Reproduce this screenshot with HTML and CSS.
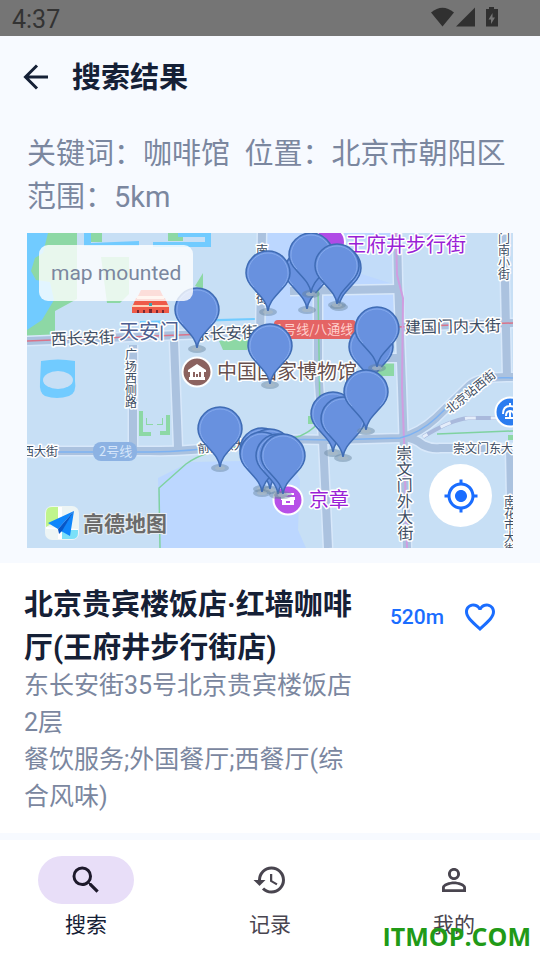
FILE: index.html
```html
<!DOCTYPE html>
<html lang="zh-CN">
<head>
    <meta charset="UTF-8">
    <meta name="viewport" content="width=device-width, initial-scale=1.0">
    <title>搜索结果</title>
    <link rel="stylesheet" href="styles.css">
</head>
<body>
    <div class="status-bar">
        <span class="time">4:37</span>
        <svg class="status-icons" viewBox="0 0 68 20" aria-hidden="true">
            <path d="M0 5.500Q11.500-4 23 5.500L11.500 19.500z"/>
            <path d="M44 .5v19H25z"/>
            <path d="M58 0h5v2h4v17.500H55V2h3zm3.500 6l-4 6.500h2.500v4.500l4-6.500h-2.500z" fill-rule="evenodd"/>
        </svg>
    </div>

    <header class="header">
        <button class="icon-btn" type="button" aria-label="返回">
            <svg class="back-icon" viewBox="0 0 36 36"><path d="M30 18H7.500M19 6.500L7.500 18 19 29.500"/></svg>
        </button>
        <h1>搜索结果</h1>
    </header>

    <main class="content">
        <p class="query">关键词：咖啡馆&nbsp; 位置：北京市朝阳区 范围：5km</p>

        <div class="map">
            <svg class="map-canvas" viewBox="27 233 486 315" role="img" aria-label="地图">
                <defs>
                    <g id="pin">
                        <ellipse cx="0" cy="1" rx="9" ry="4" fill="#66829b" opacity=".45"/>
                        <ellipse cx="0" cy="1" rx="5" ry="2" fill="#a9b9c6" opacity=".7"/>
                        <path d="M0 0C-1-9-7-14-14-22C-19-27-22-32-22-38A22 22 0 0 1 22-38C22-32 19-27 14-22C7-14 1-9 0 0z" fill="#6891df" stroke="#3f6cb5" stroke-width="1.500"/>
                        <path d="M-14-24C-18-28-20-33-20-38A20 20 0 0 1 20-38C20-33 18-28 14-24" fill="none" stroke="#84a9ec"/>
                    </g>
                </defs>

                <rect x="27" y="233" width="486" height="315" fill="#c7dff5"/>

                <!-- districts -->
                <path d="M266 233h128v97H266z" fill="#bcd7ff"/>
                <path d="M323 262l70 22v-40l-70-11z" fill="#c7dff5" opacity=".6"/>
                <path d="M158 478l32-16 100-2 10 20-2 50 8 18H160z" fill="#bcd7ff"/>

                <!-- parks -->
                <g fill="#8dd8a5">
                    <path d="M27 233h50v66l-22 12v26l-28 4z"/>
                    <path d="M101 257h28v37l-9 9h-13z"/>
                    <path d="M88 233h14v9H88zM168 233h15v8h-15zM195 286l8-13v16z"/>
                    <path d="M219 341l24-4 7 5-3 8h-24z"/>
                    <path d="M378 363h16v13h-16zM308 416h6v8h-6z"/>
                    <path d="M139 411h4v21h8v4h-12zM170 415h-4v16h-6v4h10z"/>
                    <path d="M146 418v7h7v-1h-6v-6zM163 418v7h-6v-1h5v-6z"/>
                    <path d="M508 435h5v5h-5z"/>
                </g>

                <!-- water -->
                <g fill="#71cbff">
                    <path d="M27 233h21l-5 20-8 5-4 13 5 9 14 2 4 18-12 20-15 10z"/>
                    <path d="M84 233h7v10l48-2v5H84zM178 233h33v14h-58v-5h52v-5h-27z"/>
                    <path d="M41 361q17-3 34 0v20q2 12-6 15-12 4-24 0-6-3-5-14z"/>
                    <path d="M140 321l115-3v2l-115 4z"/>
                </g>
                <ellipse cx="58" cy="380" rx="15" ry="9" fill="#c7dff5"/>

                <!-- streets -->
                <g class="street-edge">
                    <path d="M27 341L180 335L285 331L513 323"/>
                    <path d="M262 233L260 336M318 290L318 370L323 440L328 548M290 291L398 289"/>
                    <path d="M133 345V450M174 341L178 448"/>
                    <path d="M397 233L398 280L402 388L407 548M504 233L507 378M510 447L512 548M370 358h30"/>
                    <path d="M27 451H150Q190 452 230 445T330 440L400 438Q420 433 436 418L470 385Q480 376 513 377"/>
                    <path d="M403 437Q415 438 423 445Q431 449 440 448H513"/>
                </g>
                <g class="street">
                    <path d="M27 341L180 335L285 331L513 323"/>
                    <path d="M262 233L260 336M318 290L318 370L323 440L328 548M290 291L398 289"/>
                    <path d="M133 345V450M174 341L178 448"/>
                    <path d="M397 233L398 280L402 388L407 548M504 233L507 378M510 447L512 548M370 358h30"/>
                    <path d="M27 451H150Q190 452 230 445T330 440L400 438Q420 433 436 418L470 385Q480 376 513 377"/>
                    <path d="M403 437Q415 438 423 445Q431 449 440 448H513"/>
                </g>

                <!-- metro and railway lines -->
                <g fill="none">
                    <path d="M27 341L180 335L285 331L513 323" stroke="#d9738a" stroke-width="1.500"/>
                    <path d="M396 233L397 275L403 298L402 388L404 440L407 548" stroke="#d09de0" stroke-width="2"/>
                    <path d="M27 452H150Q190 452 230 445T330 440L400 438Q420 433 436 418L470 385Q480 376 513 378" stroke="#7db2f2" stroke-width="1.500"/>
                    <path d="M423 437Q450 420 468 418H513" stroke="#a9b9dc" stroke-width="4"/>
                    <path d="M423 437Q450 420 468 418H513" stroke="#e4edfa" stroke-width="3" stroke-dasharray="11 15" stroke-dashoffset="-20"/>
                    <path d="M160 548L159 488L186 464Q205 450 240 447T300 436Q320 427 320 415L318 290M437 434L513 431" stroke="#7fd2a0" stroke-width="1.500"/>
                </g>

                <rect x="93" y="442" width="44" height="19" rx="8" fill="#8cb2e3"/>
                <text class="line-name" x="99" y="456">2号线</text>
                <rect x="274" y="320" width="82" height="19" rx="4" fill="#e46464"/>
                <text class="line-name line-red" x="276" y="334">1号线/八通线</text>

                <!-- street names -->
                <g class="street-name">
                    <text x="51" y="345" transform="rotate(-2 51 345)">西长安街</text>
                    <text x="194" y="340" transform="rotate(-2 194 340)">东长安街</text>
                    <text x="405" y="333" transform="rotate(-1 405 333)">建国门内大街</text>
                    <text class="vertical" x="404" y="445" transform="rotate(-1 404 445)">崇文门外大街</text>
                </g>
                <g class="street-name small">
                    <text x="22" y="456">西大街</text>
                    <text x="198" y="453" transform="rotate(-5 198 453)">前门东大街</text>
                    <text x="453" y="453">崇文门东大街</text>
                    <text x="450" y="414" transform="rotate(-39 450 414)">北京站西街</text>
                    <text class="vertical" x="131" y="348">广场西侧路</text>
                    <text class="vertical" x="262" y="244">南河沿大街</text>
                    <text class="vertical" x="504" y="232">门南小街</text>
                    <text class="vertical" x="510" y="495">南花市大街</text>
                </g>

                <!-- places -->
                <circle cx="330" cy="242" r="15" fill="#b04be6" stroke="#fff" stroke-width="2"/>
                <text class="place purple" x="346" y="252">王府井步行街</text>

                <path d="M138 296l3-6h19l3 6zM133 305l3-7h29l3 7zM132 305h37v8h-37z" fill="#ee5a48"/>
                <path d="M137 296h27v3h-27zM132 305h37v2h-37z" fill="#ffd2b8"/>
                <path d="M137 310h2v3h-2zM143 310h2v3h-2zM149 309h3v4h-3zM156 310h2v3h-2zM162 310h2v3h-2z" fill="#7a2731"/>
                <path d="M149 303h3v3h-3z" fill="#3ca5b0"/>
                <text class="place slate" x="119" y="339">天安门</text>

                <circle cx="197" cy="372" r="14.500" fill="#8b625f" stroke="#fff" stroke-width="2"/>
                <path d="M188 370l9-6 9 6v2h-18zM189 377h16v3h-16zM190 371h3v7h-3zM201 371h3v7h-3zM195 371h4v7h-1v-4h-2v4h-1z" fill="#fff"/>
                <text class="place brown" x="217" y="379">中国国家博物馆</text>

                <circle cx="288" cy="500" r="14.500" fill="#b750e8" stroke="#fff" stroke-width="2"/>
                <path d="M283 493h11v2h-11zM281 497h14v3h-1v5h-12v-5h-1z" fill="#fff"/>
                <path d="M286 501h4v2h-4z" fill="#b750e8"/>
                <text class="place purple" x="309" y="507">京章</text>

                <circle cx="510" cy="412" r="14.500" fill="#2a7cf0" stroke="#fff" stroke-width="2"/>
                <path d="M503 414q0-8 7-8t7 8M506 416q0-5 4-5t4 5M510 403v3M510 411v7M505 418h8" fill="none" stroke="#fff" stroke-width="2"/>

                <!-- results -->
                <use href="#pin" x="307" y="309"/>
                <use href="#pin" x="268" y="311"/>
                <use href="#pin" x="311" y="293"/>
                <use href="#pin" x="339" y="306"/>
                <use href="#pin" x="337" y="304"/>
                <use href="#pin" x="197" y="348"/>
                <use href="#pin" x="270" y="384"/>
                <use href="#pin" x="371" y="385"/>
                <use href="#pin" x="377" y="367"/>
                <use href="#pin" x="333" y="452"/>
                <use href="#pin" x="343" y="457"/>
                <use href="#pin" x="366" y="430"/>
                <use href="#pin" x="220" y="467"/>
                <use href="#pin" x="262" y="488"/>
                <use href="#pin" x="270" y="489"/>
                <use href="#pin" x="262" y="492"/>
                <use href="#pin" x="278" y="494"/>
                <use href="#pin" x="283" y="494"/>

                <!-- map provider -->
                <rect x="45" y="506" width="34" height="34" rx="7" fill="#edf5f5"/>
                <path d="M52 507h6v13l-12 7v-14q0-6 6-6z" fill="#c0f58c"/>
                <path d="M62 530h16v3q0 6-6 6H62z" fill="#7be0f8"/>
                <path d="M58 507h4v32h-4zM46 527l32 2v1l-32-1z" fill="#fff"/>
                <path d="M74 511L48 523l10 6zM74 511l-4 25-9-5z" fill="#0f86fb"/>
                <path d="M74 511l-16 18 1 5 3-3z" fill="#0657c8"/>
                <text class="provider" x="83" y="531">高德地图</text>
            </svg>

            <span class="map-state">map mounted</span>
            <button class="locate-btn" type="button" aria-label="定位">
                <svg class="icon" viewBox="0 0 24 24"><path d="M12 8c-2.210 0-4 1.790-4 4s1.790 4 4 4 4-1.790 4-4-1.790-4-4-4zm8.940 3c-.46-4.170-3.770-7.480-7.940-7.940V1h-2v2.060C6.830 3.520 3.520 6.830 3.060 11H1v2h2.060c.46 4.170 3.770 7.480 7.940 7.940V23h2v-2.060c4.170-.46 7.480-3.770 7.940-7.940H23v-2h-2.060zM12 19c-3.870 0-7-3.130-7-7s3.130-7 7-7 7 3.130 7 7-3.130 7-7 7z"/></svg>
            </button>
        </div>

        <article class="place-card">
            <div class="place-info">
                <h2>北京贵宾楼饭店·红墙咖啡厅(王府井步行街店)</h2>
                <p>东长安街35号北京贵宾楼饭店2层</p>
                <p>餐饮服务;外国餐厅;西餐厅(综合风味)</p>
            </div>
            <span class="distance">520m</span>
            <button class="icon-btn like-btn" type="button" aria-label="收藏">
                <svg class="icon" viewBox="0 0 24 24"><path d="M16.500 3c-1.740 0-3.410.81-4.500 2.090C10.910 3.810 9.240 3 7.500 3 4.420 3 2 5.420 2 8.500c0 3.780 3.400 6.860 8.550 11.540L12 21.350l1.450-1.320C18.600 15.360 22 12.280 22 8.500 22 5.420 19.580 3 16.500 3zm-4.400 15.550l-.1.100-.1-.1C7.140 14.240 4 11.390 4 8.500 4 6.500 5.500 5 7.500 5c1.540 0 3.040.99 3.570 2.360h1.870C13.460 5.990 14.960 5 16.500 5c2 0 3.500 1.500 3.500 3.500 0 2.890-3.140 5.740-7.900 10.050z"/></svg>
            </button>
        </article>
    </main>

    <nav class="tab-bar">
        <a class="tab active" href="#search">
            <span class="tab-icon"><svg class="icon" viewBox="0 0 24 24"><path d="M15.500 14h-.79l-.28-.27A6.470 6.470 0 0 0 16 9.500 6.500 6.500 0 1 0 9.500 16c1.610 0 3.090-.59 4.230-1.570l.27.280v.79l5 4.990L20.490 19l-4.990-5zm-6 0C7.010 14 5 11.990 5 9.500S7.010 5 9.500 5 14 7.010 14 9.500 11.990 14 9.500 14z"/></svg></span>
            搜索
        </a>
        <a class="tab" href="#history">
            <span class="tab-icon"><svg class="icon" viewBox="0 0 24 24"><path d="M13 3a9 9 0 0 0-9 9H1l3.890 3.890.07.14L9 12H6c0-3.870 3.130-7 7-7s7 3.130 7 7-3.130 7-7 7c-1.930 0-3.680-.79-4.940-2.060l-1.420 1.420A8.954 8.954 0 0 0 13 21a9 9 0 0 0 0-18zm-1 5v5l4.280 2.540.72-1.210-3.500-2.080V8z"/></svg></span>
            记录
        </a>
        <a class="tab" href="#mine">
            <span class="tab-icon"><svg class="icon" viewBox="0 0 24 24"><path d="M12 5.900a2.100 2.100 0 1 1 0 4.200 2.100 2.100 0 0 1 0-4.200m0 9c2.970 0 6.100 1.460 6.100 2.100v1.100H5.900V17c0-.64 3.130-2.100 6.100-2.100M12 4C9.790 4 8 5.790 8 8s1.790 4 4 4 4-1.790 4-4-1.790-4-4-4zm0 9c-2.670 0-8 1.340-8 4v3h16v-3c0-2.660-5.330-4-8-4z"/></svg></span>
            我的
        </a>
    </nav>

    <div class="watermark">ITMOP.COM</div>
</body>
</html>
```

FILE: styles.css
```css
* {
    margin: 0;
    padding: 0;
    box-sizing: border-box;
}

body {
    font-family: Roboto, "Noto Sans CJK SC", sans-serif;
    background: #f7faff;
    color: #152036;
    min-height: 100vh;
    display: flex;
    flex-direction: column;
    position: relative;
}

button {
    background: none;
    border: none;
    cursor: pointer;
}

.icon {
    display: block;
    width: 36px;
    height: 36px;
    fill: currentColor;
}

.icon-btn {
    padding: 18px;
}

.status-bar {
    display: flex;
    align-items: center;
    justify-content: space-between;
    height: 36px;
    padding: 0 41px 0 12px;
    background: #757575;
    color: #333;
    font-size: 25px;
}

.time {
    padding-top: 2px;
}

.status-icons {
    width: 68px;
    height: 20px;
    margin-bottom: 2px;
    fill: #303030;
}

.header {
    display: flex;
    align-items: center;
    height: 82px;
}

.header h1 {
    padding-top: 3px;
    font-size: 29px;
    line-height: 43px;
    font-weight: 700;
}

.back-icon {
    display: block;
    width: 36px;
    height: 36px;
    fill: none;
    stroke: #152036;
    stroke-width: 3;
}

.content {
    flex: 1;
}

.query {
    padding: 15px 27px 14px;
    font-size: 29px;
    line-height: 43px;
    color: #7b879f;
}

.map {
    position: relative;
    margin: 0 27px 15px;
}

.map-canvas {
    display: block;
    width: 100%;
    height: auto;
    font-family: "Noto Sans CJK SC", sans-serif;
}

.street-edge,
.street {
    fill: none;
    stroke: #d8e8fa;
    stroke-width: 11;
}

.street {
    stroke: #abc2df;
    stroke-width: 8;
}

.street-name,
.place {
    font-size: 16px;
    fill: #3d4d63;
    stroke: #fff;
    stroke-width: 3;
    stroke-linejoin: round;
    paint-order: stroke;
}

.street-name.small {
    font-size: 12px;
}

.vertical {
    writing-mode: vertical-rl;
}

.place {
    font-size: 20px;
}

.purple {
    fill: #9a1fd6;
}

.slate {
    fill: #4d5e90;
}

.brown {
    fill: #664f4e;
}

.line-name {
    font-size: 13px;
    fill: #d6e6fa;
}

.line-red {
    fill: #ffd0cd;
}

.provider {
    font-size: 21px;
    font-weight: 700;
    fill: #6b6b6b;
    stroke: #e8eef2;
    stroke-width: 2;
    paint-order: stroke;
}

.map-state {
    position: absolute;
    left: 12px;
    top: 12px;
    padding: 12px;
    border-radius: 9px;
    background: rgba(255, 255, 255, 0.8);
    color: #7b879f;
    font-size: 21px;
    line-height: 32px;
}

.locate-btn {
    position: absolute;
    right: 21px;
    bottom: 21px;
    display: grid;
    place-items: center;
    width: 63px;
    height: 63px;
    border-radius: 50%;
    background: #fff;
    color: #1a6dff;
}

.place-card {
    display: flex;
    align-items: flex-start;
    padding: 18px 24px;
    background: #fff;
}

.place-info {
    flex: 1;
    margin-right: 28px;
    padding-top: 3px;
}

.place-info h2 {
    margin-bottom: -3px;
    font-size: 29px;
    line-height: 43px;
    font-weight: 700;
}

.place-info p {
    font-size: 25px;
    line-height: 37px;
    color: #7b879f;
}

.distance {
    font-size: 21px;
    line-height: 72px;
    font-weight: 500;
    color: #1a6dff;
}

.like-btn {
    color: #1a6dff;
}

.tab-bar {
    display: flex;
    gap: 12px;
    height: 120px;
    padding: 16px 0;
    background: #fff;
}

.tab {
    flex: 1;
    display: flex;
    flex-direction: column;
    align-items: center;
    gap: 5px;
    color: #49454f;
    font-size: 21px;
    line-height: 32px;
    text-decoration: none;
}

.tab-icon {
    display: grid;
    place-items: center;
    width: 96px;
    height: 48px;
    border-radius: 24px;
}

.active {
    color: #152036;
}

.active .tab-icon {
    background: #e8def8;
    color: #1d192b;
}

.watermark {
    position: absolute;
    right: 9px;
    bottom: 7px;
    color: #219a17;
    font: 700 25px/34px "Open Sans", sans-serif;
}
```
